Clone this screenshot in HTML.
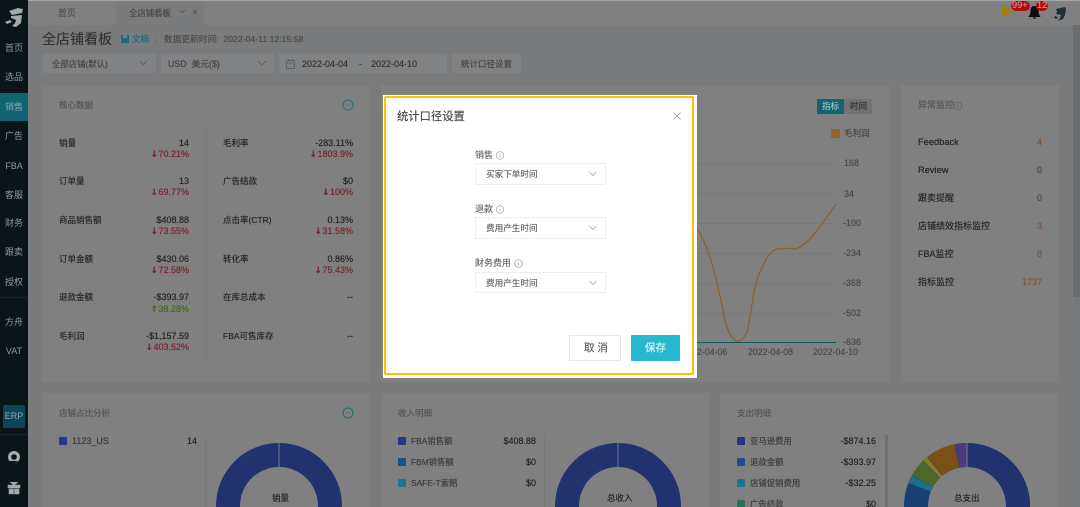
<!DOCTYPE html>
<html lang="zh"><head><meta charset="utf-8"><title>全店铺看板</title>
<style>
*{box-sizing:border-box}
html,body{margin:0;padding:0;width:1080px;height:507px;overflow:hidden;background:#797b7d}
body{font-family:"Liberation Sans","Noto Sans CJK SC",sans-serif;position:relative}
#w{position:absolute;left:0;top:0;width:1080px;height:507px;overflow:hidden;filter:blur(.35px)}
.b{position:absolute}
.t{position:absolute;white-space:nowrap;line-height:12px;font-size:9px;color:#262626;text-shadow:0 0 .4px currentColor}
.s{position:absolute;left:0;width:28px;text-align:center;white-space:nowrap;line-height:12px;font-size:9px;color:#93979a}
.c{background:#808080;position:absolute}
.g{color:#565656}
.red{color:#78262f}
.grn{color:#3f6826}
.o{color:#805536}
.q{color:#4a4a4a}
.f{position:absolute;background:#818284}
.m{color:#6a6a6a;font-size:8.6px}
.t b{font-weight:bold;font-family:"DejaVu Sans",sans-serif;font-size:9px;margin-right:.5px}
svg{position:absolute;left:0;top:0;overflow:hidden}
</style></head><body><div id="w">

<div class="b" style="left:0;top:0;width:1080px;height:1px;background:#a5a5a5"></div>
<div class="b" style="left:28px;top:1px;width:1052px;height:24px;background:#808080"></div>
<div class="b" style="left:116px;top:1px;width:88px;height:24px;background:#797b7d"></div>
<div class="b" style="left:0;top:0;width:28px;height:507px;background:#0b1419"></div>
<div class="b" style="left:0;top:93px;width:28px;height:28px;background:#126472"></div>
<div class="b" style="left:0;top:297px;width:28px;height:1px;background:#1c2429"></div>
<div class="b" style="left:0;top:434px;width:28px;height:1px;background:#1c2429"></div>
<div class="b" style="left:3px;top:405px;width:22px;height:23px;background:#0c4558;border-radius:2px"></div>
<div class="b" style="left:1073px;top:25px;width:7px;height:482px;background:#767879"></div>
<div class="b" style="left:1073px;top:25px;width:7px;height:272px;background:#6c6e70"></div>

<div class="s" style="top:42px">首页</div>
<div class="s" style="top:71px">选品</div>
<div class="s" style="top:101px;color:#86aab0">销售</div>
<div class="s" style="top:130px">广告</div>
<div class="s" style="top:160px">FBA</div>
<div class="s" style="top:189px">客服</div>
<div class="s" style="top:217px">财务</div>
<div class="s" style="top:246px">跟卖</div>
<div class="s" style="top:276px">授权</div>
<div class="s" style="top:316px">方舟</div>
<div class="s" style="top:345px">VAT</div>
<div class="s" style="top:410px;color:#8aabb7">ERP</div>

<div class="t" style="left:58px;top:7px;color:#505050">首页</div>
<div class="t" style="left:129px;top:7px;color:#484848;font-size:8.4px">全店铺看板</div>

<div class="t" style="left:42px;top:32px;font-size:14px;line-height:14px;color:#333">全店铺看板</div>
<div class="b" style="left:121px;top:35px;width:8px;height:8px;background:#1a6c7c"></div>
<div class="b" style="left:123px;top:35px;width:4px;height:3px;background:#797b7d"></div>
<div class="t" style="left:132px;top:33px;color:#1a6c7c;font-size:8.5px">文档</div>
<div class="b" style="left:156px;top:34px;width:1px;height:10px;background:#6e7072"></div>
<div class="t" style="left:164px;top:33px;color:#4c4c4c;font-size:8.7px">数据更新时间:&nbsp;&nbsp;2022-04-11 12:15:58</div>

<div class="f" style="left:43px;top:54px;width:113px;height:19px"></div>
<div class="f" style="left:161px;top:54px;width:113px;height:19px"></div>
<div class="f" style="left:279px;top:54px;width:168px;height:19px"></div>
<div class="f" style="left:452px;top:54px;width:69px;height:19px"></div>
<div class="t" style="left:52px;top:58px;color:#454545;font-size:8.4px">全部店铺(默认)</div>
<div class="t" style="left:168px;top:58px;color:#454545;font-size:8.8px">USD&nbsp; 美元($)</div>
<div class="t" style="left:302px;top:58px;color:#363636;font-size:9px">2022-04-04</div>
<div class="t" style="left:359px;top:58px;color:#363636;font-size:9px">-</div>
<div class="t" style="left:371px;top:58px;color:#363636;font-size:9px">2022-04-10</div>
<div class="t" style="left:461px;top:58px;color:#454545;font-size:8.5px">统计口径设置</div>

<div class="c" style="left:42px;top:85px;width:328px;height:297px"></div>
<div class="c" style="left:381px;top:85px;width:509px;height:297px"></div>
<div class="c" style="left:901px;top:85px;width:158px;height:297px"></div>
<div class="c" style="left:42px;top:393px;width:328px;height:114px"></div>
<div class="c" style="left:381px;top:393px;width:328px;height:114px"></div>
<div class="c" style="left:720px;top:393px;width:338px;height:114px"></div>

<div class="t g" style="left:59px;top:99px;font-size:8.5px">核心数据</div>
<div class="t" style="left:59px;top:137px;font-size:8.5px">销量</div>
<div class="t" style="right:891px;top:137px">14</div>
<div class="t red" style="right:891px;top:148px"><b>↓</b>70.21%</div>
<div class="t" style="left:223px;top:137px;font-size:8.5px">毛利率</div>
<div class="t" style="right:727px;top:137px">-283.11%</div>
<div class="t red" style="right:727px;top:148px"><b>↓</b>1803.9%</div>
<div class="t" style="left:59px;top:175px;font-size:8.5px">订单量</div>
<div class="t" style="right:891px;top:175px">13</div>
<div class="t red" style="right:891px;top:186px"><b>↓</b>69.77%</div>
<div class="t" style="left:223px;top:175px;font-size:8.5px">广告结款</div>
<div class="t" style="right:727px;top:175px">$0</div>
<div class="t red" style="right:727px;top:186px"><b>↓</b>100%</div>
<div class="t" style="left:59px;top:214px;font-size:8.5px">商品销售额</div>
<div class="t" style="right:891px;top:214px">$408.88</div>
<div class="t red" style="right:891px;top:225px"><b>↓</b>73.55%</div>
<div class="t" style="left:223px;top:214px;font-size:8.5px">点击率(CTR)</div>
<div class="t" style="right:727px;top:214px">0.13%</div>
<div class="t red" style="right:727px;top:225px"><b>↓</b>31.58%</div>
<div class="t" style="left:59px;top:253px;font-size:8.5px">订单金额</div>
<div class="t" style="right:891px;top:253px">$430.06</div>
<div class="t red" style="right:891px;top:264px"><b>↓</b>72.58%</div>
<div class="t" style="left:223px;top:253px;font-size:8.5px">转化率</div>
<div class="t" style="right:727px;top:253px">0.86%</div>
<div class="t red" style="right:727px;top:264px"><b>↓</b>75.43%</div>
<div class="t" style="left:59px;top:291px;font-size:8.5px">退款金额</div>
<div class="t" style="right:891px;top:291px">-$393.97</div>
<div class="t grn" style="right:891px;top:303px"><b>↑</b>38.28%</div>
<div class="t" style="left:223px;top:291px;font-size:8.5px">在库总成本</div>
<div class="t" style="right:727px;top:291px">--</div>
<div class="t" style="left:59px;top:330px;font-size:8.5px">毛利润</div>
<div class="t" style="right:891px;top:330px">-$1,157.59</div>
<div class="t red" style="right:891px;top:341px"><b>↓</b>403.52%</div>
<div class="t" style="left:223px;top:330px;font-size:8.5px">FBA可售库存</div>
<div class="t" style="right:727px;top:330px">--</div>

<div class="b" style="left:817px;top:99px;width:27px;height:15px;background:#126472"></div>
<div class="b" style="left:844px;top:99px;width:28px;height:15px;background:#727272"></div>
<div class="t" style="left:822px;top:100px;color:#9cbcc1;font-size:8.5px">指标</div>
<div class="t" style="left:850px;top:100px;color:#333;font-size:8.5px">时间</div>
<div class="b" style="left:831px;top:129px;width:9px;height:9px;background:#96632a"></div>
<div class="t" style="left:844px;top:127px;color:#484848;font-size:8.5px">毛利润</div>
<div class="t q" style="left:844px;top:157px">168</div>
<div class="t q" style="left:844px;top:188px">34</div>
<div class="t q" style="left:843px;top:217px">-100</div>
<div class="t q" style="left:843px;top:247px">-234</div>
<div class="t q" style="left:843px;top:277px">-368</div>
<div class="t q" style="left:843px;top:307px">-502</div>
<div class="t q" style="left:843px;top:336px">-636</div>
<div class="t q" style="left:697px;top:346px;font-size:8.8px">2-04-06</div>
<div class="t q" style="left:748px;top:346px;font-size:8.8px">2022-04-08</div>
<div class="t q" style="left:813px;top:346px;font-size:8.8px">2022-04-10</div>

<div class="t g" style="left:918px;top:99px;font-size:9px">异常监控</div>
<div class="t" style="left:918px;top:136px;font-size:9.3px">Feedback</div>
<div class="t o" style="right:38px;top:136px">4</div>
<div class="t" style="left:918px;top:164px;font-size:9.3px">Review</div>
<div class="t q" style="right:38px;top:164px">0</div>
<div class="t" style="left:918px;top:192px;font-size:9px">跟卖提醒</div>
<div class="t q" style="right:38px;top:192px">0</div>
<div class="t" style="left:918px;top:220px;font-size:9px">店铺绩效指标监控</div>
<div class="t o" style="right:38px;top:220px">3</div>
<div class="t" style="left:918px;top:248px;font-size:9px">FBA监控</div>
<div class="t o" style="right:38px;top:248px">8</div>
<div class="t" style="left:918px;top:276px;font-size:9px">指标监控</div>
<div class="t o" style="right:38px;top:276px">1737</div>

<div class="t g" style="left:59px;top:407px;font-size:8.5px">店铺占比分析</div>
<div class="b" style="left:59px;top:437px;width:8px;height:8px;background:#253688;border-radius:1px"></div>
<div class="t" style="left:72px;top:435px;color:#3c3c3c">1123_US</div>
<div class="t" style="right:883px;top:435px">14</div>
<div class="t" style="left:272px;top:492px;font-size:8.5px">销量</div>

<div class="t g" style="left:398px;top:407px;font-size:8.5px">收入明细</div>
<div class="b" style="left:398px;top:437px;width:8px;height:8px;background:#253688;border-radius:1px"></div>
<div class="t" style="left:411px;top:435px;color:#3c3c3c;font-size:8.4px">FBA销售额</div>
<div class="t" style="right:544px;top:435px">$408.88</div>
<div class="b" style="left:398px;top:458px;width:8px;height:8px;background:#1a4f90;border-radius:1px"></div>
<div class="t" style="left:411px;top:456px;color:#3c3c3c;font-size:8.4px">FBM销售额</div>
<div class="t" style="right:544px;top:456px">$0</div>
<div class="b" style="left:398px;top:479px;width:8px;height:8px;background:#1b7490;border-radius:1px"></div>
<div class="t" style="left:411px;top:477px;color:#3c3c3c;font-size:8.4px">SAFE-T索赔</div>
<div class="t" style="right:544px;top:477px">$0</div>
<div class="t" style="left:607px;top:492px;font-size:8.5px">总收入</div>

<div class="t g" style="left:737px;top:407px;font-size:8.5px">支出明细</div>
<div class="b" style="left:737px;top:437px;width:8px;height:8px;background:#253688;border-radius:1px"></div>
<div class="t" style="left:750px;top:435px;color:#3c3c3c;font-size:8.4px">亚马逊费用</div>
<div class="t" style="right:204px;top:435px">-$874.16</div>
<div class="b" style="left:737px;top:458px;width:8px;height:8px;background:#1a4f90;border-radius:1px"></div>
<div class="t" style="left:750px;top:456px;color:#3c3c3c;font-size:8.4px">退款金额</div>
<div class="t" style="right:204px;top:456px">-$393.97</div>
<div class="b" style="left:737px;top:479px;width:8px;height:8px;background:#1b7490;border-radius:1px"></div>
<div class="t" style="left:750px;top:477px;color:#3c3c3c;font-size:8.4px">店铺促销费用</div>
<div class="t" style="right:204px;top:477px">-$32.25</div>
<div class="b" style="left:737px;top:500px;width:8px;height:7px;background:#2a705c;border-radius:1px 1px 0 0"></div>
<div class="t" style="left:750px;top:498px;height:9px;overflow:hidden;color:#3c3c3c;font-size:8.4px">广告结款</div>
<div class="t" style="right:204px;top:498px;height:9px;overflow:hidden">$0</div>
<div class="b" style="left:885px;top:435px;width:3px;height:72px;background:#707070"></div>
<div class="t" style="left:954px;top:492px;font-size:8.5px">总支出</div>

<svg width="1080" height="507" viewBox="0 0 1080 507" fill="none">
<path d="M9 11l9-3 5 1-1 4-10 2zM11 16l11-1-1 8-5 4-4-1 3-3 1-3-5-2zM5 22l5-2 2 2-5 2z" fill="#a5a9ab"/>
<circle cx="14" cy="457" r="6" fill="#a5a9ab"/><circle cx="14" cy="457" r="2.800" fill="#0b1419"/><path d="M10 461h8l-3 2h-5z" fill="#0b1419"/>
<path d="M8 485h12v3H8zM9 489h4.500v5H9zM14.500 489H19v5h-4.500zM10 482l4 3 4-3" fill="#a5a9ab" stroke="#a5a9ab" stroke-width=".6"/>
<path d="M180 10l2.500 2.500 2.500-2.500M193 10l4 4M197 10l-4 4" stroke="#4c4c4c" stroke-width=".7"/>
<path d="M140 61l3.500 3.500L147 61M258 61l4 4 4-4" stroke="#5a5a5a" stroke-width=".8"/>
<rect x="286.500" y="60.500" width="8" height="8" stroke="#5a5c5e" stroke-width=".8"/><path d="M286.500 63h8M288.500 59v2M292.500 59v2" stroke="#5a5c5e" stroke-width=".8"/>
<g stroke="#1a6c7c" stroke-width=".9"><circle cx="348" cy="105" r="5"/><circle cx="348" cy="413" r="5"/></g>
<path d="M346 105h.8M347.600 105h.8M349.200 105h.8M346 413h.8M347.600 413h.8M349.200 413h.8" stroke="#1a6c7c" stroke-width="1"/>
<circle cx="958" cy="106" r="3.800" stroke="#5a5a5a" stroke-width=".7"/><path d="M958 105.500v2.500M958 104v.8" stroke="#5a5a5a" stroke-width=".7"/>
<path d="M206.500 127v233M205.500 435v72M544.500 435v72" stroke="#787878"/>
<path d="M697 163.500h139M697 193.500h139M697 223.500h139M697 253.500h139M697 283.500h139M697 313.500h139" stroke="#767676" stroke-width=".8"/>
<path d="M697 342.500h139" stroke="#0f5c68" stroke-width="1.100"/>
<path d="M697 228C704 240 709 252 713 267C717 282 720 296 723 310C725 322 727 329 730 334C733 339 735 341 738 341C741 341 744 339 747 332C750 320 752 302 755 287C758 275 762 266 767 258C770 253 773 250 777 249C782 248 788 248 793 249C798 249 802 246 807 242C812 237 818 230 823 222C828 216 832 210 836 204" stroke="#8f5f28" stroke-width="1.200"/>
<g fill="none" stroke-width="24">
<circle cx="279" cy="506" r="51" stroke="#22326f"/>
<circle cx="618" cy="506" r="51" stroke="#22326f"/>
<circle cx="967" cy="506" r="51" stroke="#184073"/>
<g transform="rotate(-90 967 506)">
<circle cx="967" cy="506" r="51" stroke="#22326f" pathLength="360" stroke-dasharray="210 150"/>
<circle cx="967" cy="506" r="51" stroke="#1b7088" pathLength="360" stroke-dasharray="7.500 352.500" stroke-dashoffset="-291.600"/>
<circle cx="967" cy="506" r="51" stroke="#4b672a" pathLength="360" stroke-dasharray="16.500 343.500" stroke-dashoffset="-299.500"/>
<circle cx="967" cy="506" r="51" stroke="#8c7928" pathLength="360" stroke-dasharray="4.300 355.700" stroke-dashoffset="-316.300"/>
<circle cx="967" cy="506" r="51" stroke="#7a5016" pathLength="360" stroke-dasharray="27.500 332.500" stroke-dashoffset="-321"/>
<circle cx="967" cy="506" r="51" stroke="#4e3b7e" pathLength="360" stroke-dasharray="10.600 349.400" stroke-dashoffset="-349"/>
</g></g>
<path d="M279 443v24M618 443v24M967 443v24" stroke="#9a9aa0" stroke-width=".7"/>
<path d="M1002 5l11 6-11 6z" fill="#a97c0e"/>
<path d="M1034.500 6c3 0 4 2 4 5 0 3 1 4 2 6h-12c1-2 2-3 2-6 0-3 1-5 4-5z" fill="#0c0c0c"/><path d="M1032.500 17.500h4l-2 1.500z" fill="#0c0c0c"/>
<path d="M1056 9l9-2 1 2-1 6-2 4-5 2 2-3 1-3-5-1 1-2-1-3zM1055 16l3 1-1 2-3-1z" fill="#1f303a"/>
</svg>

<div class="b" style="left:1011px;top:1px;width:19px;height:10px;background:#b00e0e;border-radius:5px"></div>
<div class="t" style="left:1012px;top:0;color:#d2a8a8;font-size:9.200px;line-height:11px;text-shadow:none">99+</div>
<div class="b" style="left:1036px;top:1px;width:12px;height:10px;background:#b00e0e;border-radius:5px"></div>
<div class="t" style="left:1037px;top:0;color:#d2a8a8;font-size:9.200px;line-height:11px;text-shadow:none">12</div>

<div class="b" style="left:383px;top:95px;width:314px;height:283px;background:#fff"></div>
<div class="b" style="left:384px;top:96px;width:310px;height:279px;border:2px solid #ffc000;border-radius:2px"></div>
<div class="t" style="left:397px;top:111px;font-size:11.300px;color:#4c4c4c;line-height:13px">统计口径设置</div>
<div class="t" style="left:475px;top:149px;color:#6e6e6e">销售</div>
<div class="t" style="left:475px;top:203px;color:#6e6e6e">退款</div>
<div class="t" style="left:475px;top:257px;color:#6e6e6e">财务费用</div>
<div class="b" style="left:475px;top:163px;width:131px;height:22px;border:1px solid #eeeff2;background:#fff"></div>
<div class="b" style="left:475px;top:217px;width:131px;height:22px;border:1px solid #eeeff2;background:#fff"></div>
<div class="b" style="left:475px;top:272px;width:131px;height:21px;border:1px solid #eeeff2;background:#fff"></div>
<div class="t m" style="left:486px;top:168px">买家下单时间</div>
<div class="t m" style="left:486px;top:222px">费用产生时间</div>
<div class="t m" style="left:486px;top:277px">费用产生时间</div>
<div class="b" style="left:569px;top:335px;width:52px;height:26px;border:1px solid #e8e9ec;background:#fff"></div>
<div class="b" style="left:631px;top:335px;width:49px;height:26px;background:#27b7cf;border-radius:1px"></div>
<div class="t" style="left:584px;top:342px;color:#5e5e5e;font-size:10.500px">取 消</div>
<div class="t" style="left:645px;top:342px;color:#e8f8fb;font-size:10.500px">保存</div>
<svg width="1080" height="507" viewBox="0 0 1080 507" fill="none">
<path d="M673.500 112.500l7 7M680.500 112.500l-7 7" stroke="#999" stroke-width=".8"/>
<g stroke="#999" stroke-width=".7"><circle cx="500" cy="155.500" r="3.800"/><circle cx="500" cy="209.500" r="3.800"/><circle cx="518.500" cy="263.500" r="3.800"/>
<path d="M500 155v2.500M500 153.500v.8M500 209v2.500M500 207.500v.8M518.500 263v2.500M518.500 261.500v.8"/></g>
<path d="M589.500 172l3.500 3.500 3.500-3.500M589.500 226l3.500 3.500 3.500-3.500M589.500 281l3.500 3.500 3.500-3.500" stroke="#a0a0a0" stroke-width=".8"/>
</svg>
</div></body></html>
